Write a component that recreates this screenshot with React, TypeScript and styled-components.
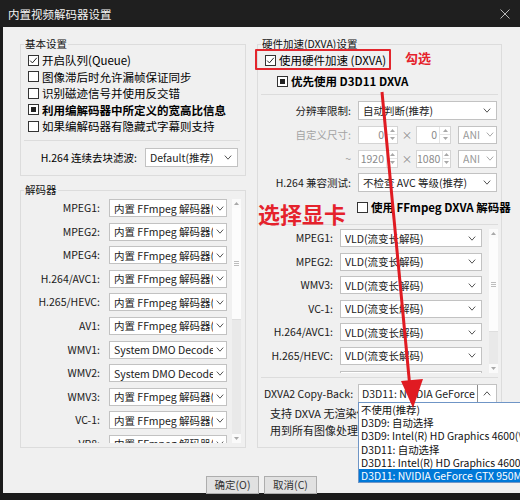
import React from 'react';
import styled, { createGlobalStyle } from 'styled-components';

const FONT = '"Noto Sans CJK SC", "Noto Sans", sans-serif';

const GlobalStyle = createGlobalStyle`
  html, body {
    margin: 0;
    padding: 0;
    background: #1b1b1b;
  }
  body {
    font-family: ${FONT};
  }
`;

const Window = styled.div`
  position: relative;
  width: 520px;
  height: 500px;
  overflow: hidden;
  display: flex;
  flex-direction: column;
  background: #1b1b1b;
  font-family: ${FONT};
  color: #000;
`;

const TitleBar = styled.div`
  height: 27px;
  flex: none;
  display: flex;
  align-items: center;
  justify-content: space-between;
  padding: 0 10px 0 8px;
  background: #1f1f1f;
  color: #f2f2f2;
  font-size: 11.5px;
`;

const Body = styled.div`
  flex: none;
  height: 466px;
  margin-left: 3px;
  box-sizing: border-box;
  padding: 9px 0 0 17px;
  background: #f0f0f0;
  display: flex;
  flex-direction: column;
`;

const Columns = styled.div`
  display: flex;
  gap: 11px;
  height: 412px;
`;

const LeftColumn = styled.div`
  width: 226px;
  display: flex;
  flex-direction: column;
  gap: 6px;
`;

const Group = styled.fieldset<{ $width: number; $height: number; $padRight?: number }>`
  margin: 0;
  min-width: 0;
  box-sizing: border-box;
  width: ${(p) => p.$width}px;
  height: ${(p) => p.$height}px;
  border: 1px solid #dcdcdc;
  padding: 0 ${(p) => p.$padRight ?? 3}px 0 3px;
`;

const Legend = styled.legend`
  padding: 0 1px;
  font-size: 10.5px;
  line-height: 16px;
  color: #111;
`;

const CheckRow = styled.label<{ $indent?: number; $bold?: boolean; $top?: number }>`
  display: flex;
  align-items: center;
  gap: 3px;
  height: 16.5px;
  margin-top: ${(p) => p.$top ?? 0}px;
  padding-left: ${(p) => p.$indent ?? 4}px;
  font-size: 11.5px;
  font-weight: ${(p) => (p.$bold ? 700 : 400)};
  white-space: nowrap;
`;

const Box = styled.span`
  width: 11px;
  height: 11px;
  flex: none;
  box-sizing: border-box;
  border: 1px solid #333;
  background: #fff;
  display: flex;
  align-items: center;
  justify-content: center;
`;

const Mark = styled.span`
  width: 5px;
  height: 5px;
  background: #222;
`;

const Separator = styled.div<{ $top: number }>`
  height: 1px;
  margin-top: ${(p) => p.$top}px;
  background: #dcdcdc;
`;

const SelectBox = styled.div<{ $width: number; $height?: number; $disabled?: boolean }>`
  width: ${(p) => p.$width}px;
  height: ${(p) => p.$height ?? 18}px;
  box-sizing: border-box;
  flex: none;
  border: 1px solid #c2c2c2;
  background: #fff;
  display: flex;
  align-items: center;
  padding-left: 4px;
  font-size: 10.5px;
  color: ${(p) => (p.$disabled ? '#9a9a9a' : '#222')};
`;

const SelectText = styled.span`
  flex: 1;
  min-width: 0;
  overflow: hidden;
  white-space: nowrap;
`;

const Chevron = styled.span<{ $narrow?: boolean }>`
  width: ${(p) => (p.$narrow ? 13 : 18)}px;
  flex: none;
  display: flex;
  align-items: center;
  justify-content: center;
`;

const OpenField = styled.span`
  flex: 1;
  min-width: 0;
  height: 100%;
  box-sizing: border-box;
  margin-left: -4px;
  padding-left: 3px;
  border-right: 1px solid #8c8c8c;
  overflow: hidden;
  white-space: nowrap;
  display: flex;
  align-items: center;
`;

const Spin = styled.div<{ $width: number }>`
  width: ${(p) => p.$width}px;
  height: 18px;
  flex: none;
  box-sizing: border-box;
  border: 1px solid #d4d4d4;
  background: #fff;
  display: flex;
`;

const SpinValue = styled.span`
  flex: 1;
  text-align: right;
  padding-right: 2px;
  font-size: 10.5px;
  line-height: 16px;
  color: #8a8a8a;
`;

const SpinArrows = styled.span`
  width: 10px;
  display: flex;
  flex-direction: column;
  border-left: 1px solid #e4e4e4;
`;

const SpinArrow = styled.span`
  flex: 1;
  display: flex;
  align-items: center;
  justify-content: center;
  & + & {
    border-top: 1px solid #e4e4e4;
  }
`;

const Times = styled.span`
  width: 18px;
  flex: none;
  text-align: center;
  font-size: 10.5px;
  line-height: 18px;
  color: #8a8a8a;
`;

const SizeControls = styled.div`
  display: flex;
  align-items: center;
`;

const FormRow = styled.div<{ $top?: number; $alignLeft?: boolean }>`
  display: grid;
  grid-template-columns: 90px 139px;
  column-gap: 7px;
  align-items: center;
  height: 19px;
  margin-top: ${(p) => p.$top ?? 5}px;
  font-size: 10.5px;
  & > span:first-child {
    text-align: ${(p) => (p.$alignLeft ? 'left' : 'right')};
    padding-left: ${(p) => (p.$alignLeft ? 3 : 0)}px;
    white-space: nowrap;
  }
`;

const FieldLabel = styled.span<{ $disabled?: boolean }>`
  color: ${(p) => (p.$disabled ? '#a3a3a3' : '#1a1a1a')};
`;

const FilterRow = styled.div`
  display: grid;
  grid-template-columns: 113px 93px;
  column-gap: 8px;
  align-items: center;
  height: 19px;
  margin-top: 7px;
  font-size: 10.5px;
  & > span:first-child {
    text-align: right;
    white-space: nowrap;
  }
`;

const ScrollArea = styled.div<{ $height: number; $top: number }>`
  display: flex;
  height: ${(p) => p.$height}px;
  margin-top: ${(p) => p.$top}px;
  overflow: hidden;
`;

const ScrollRows = styled.div`
  flex: 1;
  min-width: 0;
`;

const DecoderRow = styled.div<{ $labelWidth: number; $gap: number }>`
  display: grid;
  grid-template-columns: ${(p) => p.$labelWidth}px auto;
  column-gap: ${(p) => p.$gap}px;
  align-items: start;
  height: 23.6px;
  font-size: 10.5px;
  & > span:first-child {
    text-align: right;
    line-height: 18px;
    white-space: nowrap;
    color: #1a1a1a;
  }
`;

const Scrollbar = styled.div`
  width: 9px;
  flex: none;
  display: flex;
  flex-direction: column;
  background: #e9e9e9;
`;

const ScrollArrow = styled.span`
  height: 9px;
  flex: none;
  display: flex;
  align-items: center;
  justify-content: center;
  background: #fafafa;
`;

const ScrollThumb = styled.span<{ $height: number }>`
  height: ${(p) => p.$height}px;
  flex: none;
  box-sizing: border-box;
  background: #fcfcfc;
  border-bottom: 1px solid #dedede;
  display: flex;
  flex-direction: column;
  align-items: center;
  justify-content: center;
  gap: 1px;
  & > i {
    width: 5px;
    height: 1px;
    background: #bdbdbd;
  }
`;

const ScrollTrack = styled.span`
  flex: 1;
`;

const Note = styled.div<{ $top?: number }>`
  margin-top: ${(p) => p.$top ?? 0}px;
  padding-left: 9px;
  font-size: 11px;
  line-height: 17px;
  color: #1a1a1a;
  white-space: nowrap;
  overflow: hidden;
`;

const Gap = styled.span<{ $width: number }>`
  width: ${(p) => p.$width}px;
  flex: none;
`;

const Footer = styled.div`
  margin-left: -17px;
  padding-top: 28px;
  display: flex;
  justify-content: center;
  gap: 5px;
`;

const Button = styled.button`
  width: 53px;
  height: 18px;
  box-sizing: border-box;
  padding: 0;
  border: 1px solid #adadad;
  background: #e1e1e1;
  font-family: ${FONT};
  font-size: 10.5px;
  line-height: 16px;
  color: #333;
`;

/* overlays: the open drop-down list and the red annotations */

const DropList = styled.ul`
  position: absolute;
  left: 358px;
  top: 402px;
  width: 172px;
  margin: 0;
  padding: 0;
  list-style: none;
  box-sizing: border-box;
  border: 1px solid #6f95c6;
  background: #fff;
  font-size: 10.4px;
  color: #111;
`;

const DropItem = styled.li<{ $active?: boolean }>`
  height: 13.2px;
  line-height: 13.2px;
  padding-left: 2px;
  white-space: nowrap;
  background: ${(p) => (p.$active ? '#0078d7' : 'transparent')};
  color: ${(p) => (p.$active ? '#fff' : '#111')};
`;

const RedBox = styled.div`
  position: absolute;
  left: 255px;
  top: 49px;
  width: 136px;
  height: 21px;
  box-sizing: border-box;
  border: 2.5px solid #e3262d;
  border-radius: 1px;
`;

const RedNote = styled.span<{ $left: number; $top: number; $size: number }>`
  position: absolute;
  left: ${(p) => p.$left}px;
  top: ${(p) => p.$top}px;
  font-size: ${(p) => p.$size}px;
  line-height: ${(p) => p.$size + 4}px;
  font-weight: 700;
  color: #e5222c;
  white-space: nowrap;
`;

const ArrowLayer = styled.svg`
  position: absolute;
  left: 0;
  top: 0;
  pointer-events: none;
`;

const ChevronDown = ({ color = '#555' }: { color?: string }) => (
  <svg width="8" height="5" viewBox="0 0 8 5">
    <path d="M0.8 0.6 L4 4.2 L7.2 0.6" fill="none" stroke={color} strokeWidth="1" />
  </svg>
);

const ChevronUp = ({ color = '#555' }: { color?: string }) => (
  <svg width="8" height="5" viewBox="0 0 8 5">
    <path d="M0.8 4.4 L4 0.8 L7.2 4.4" fill="none" stroke={color} strokeWidth="1" />
  </svg>
);

const TinyArrow = ({ up }: { up?: boolean }) => (
  <svg width="5" height="3" viewBox="0 0 5 3">
    <path d={up ? 'M0 3 L2.5 0 L5 3 Z' : 'M0 0 L2.5 3 L5 0 Z'} fill="#a8a8a8" />
  </svg>
);

const Check = ({ state, label, ...rest }: {
  state: 'on' | 'off' | 'mark';
  label: string;
  $indent?: number;
  $bold?: boolean;
  $top?: number;
}) => (
  <CheckRow {...rest}>
    <Box>
      {state === 'on' && (
        <svg width="9" height="9" viewBox="0 0 9 9">
          <path d="M1.2 4.6 L3.4 6.9 L7.8 1.8" fill="none" stroke="#222" strokeWidth="1" />
        </svg>
      )}
      {state === 'mark' && <Mark />}
    </Box>
    {label}
  </CheckRow>
);

const Select = ({ text, width, height, disabled, narrow }: {
  text: string;
  width: number;
  height?: number;
  disabled?: boolean;
  narrow?: boolean;
}) => (
  <SelectBox $width={width} $height={height} $disabled={disabled}>
    <SelectText>{text}</SelectText>
    <Chevron $narrow={narrow}>
      <ChevronDown color={disabled ? '#a8a8a8' : '#555'} />
    </Chevron>
  </SelectBox>
);

const SpinBox = ({ value, width }: { value: string; width: number }) => (
  <Spin $width={width}>
    <SpinValue>{value}</SpinValue>
    <SpinArrows>
      <SpinArrow>
        <TinyArrow up />
      </SpinArrow>
      <SpinArrow>
        <TinyArrow />
      </SpinArrow>
    </SpinArrows>
  </Spin>
);

const FakeScrollbar = ({ thumb }: { thumb: number }) => (
  <Scrollbar>
    <ScrollArrow>
      <TinyArrow up />
    </ScrollArrow>
    <ScrollThumb $height={thumb}>
      <i />
      <i />
      <i />
    </ScrollThumb>
    <ScrollTrack />
    <ScrollArrow>
      <TinyArrow />
    </ScrollArrow>
  </Scrollbar>
);

const FF = '内置 FFmpeg 解码器(推荐)';
const DMO = 'System DMO Decoder';

const softwareDecoders = [
  ['MPEG1', FF],
  ['MPEG2', FF],
  ['MPEG4', FF],
  ['H.264/AVC1', FF],
  ['H.265/HEVC', FF],
  ['AV1', FF],
  ['WMV1', DMO],
  ['WMV2', DMO],
  ['WMV3', FF],
  ['VC-1', FF],
  ['VP8', FF],
];

const dxvaDecoders = ['MPEG1', 'MPEG2', 'WMV3', 'VC-1', 'H.264/AVC1', 'H.265/HEVC', 'VP9'];

const copyBackOptions = [
  '不使用(推荐)',
  'D3D9: 自动选择',
  'D3D9: Intel(R) HD Graphics 4600(\\\\.\\DISPLAY1)',
  'D3D11: 自动选择',
  'D3D11: Intel(R) HD Graphics 4600',
  'D3D11: NVIDIA GeForce GTX 950M',
];

const App = () => (
  <Window>
    <GlobalStyle />
    <TitleBar>
      <span>内置视频解码器设置</span>
      <svg width="10" height="10" viewBox="0 0 10 10">
        <path d="M0.5 0.5 L9.5 9.5 M9.5 0.5 L0.5 9.5" stroke="#b8b8b8" strokeWidth="1" />
      </svg>
    </TitleBar>

    <Body>
      <Columns>
        <LeftColumn>
          <Group $width={226} $height={140} $padRight={5}>
            <Legend>基本设置</Legend>
            <Check state="on" label="开启队列(Queue)" />
            <Check state="off" label="图像滞后时允许漏帧保证同步" />
            <Check state="off" label="识别磁迹信号并使用反交错" />
            <Check state="mark" label="利用编解码器中所定义的宽高比信息" $bold />
            <Check state="off" label="如果编解码器有隐藏式字幕则支持" />
            <Separator $top={5.5} />
            <FilterRow>
              <span>H.264 连续去块滤波:</span>
              <Select text="Default(推荐)" width={93} height={19} />
            </FilterRow>
          </Group>

          <Group $width={226} $height={266} $padRight={4}>
            <Legend>解码器</Legend>
            <ScrollArea $height={244} $top={1}>
              <ScrollRows>
                {softwareDecoders.map(([name, value]) => (
                  <DecoderRow key={name} $labelWidth={76} $gap={9}>
                    <span>{name}:</span>
                    <Select text={value} width={118} narrow />
                  </DecoderRow>
                ))}
              </ScrollRows>
              <FakeScrollbar thumb={112} />
            </ScrollArea>
          </Group>
        </LeftColumn>

        <Group $width={245} $height={412}>
          <Legend>硬件加速(DXVA)设置</Legend>
          <Check state="on" label="使用硬件加速 (DXVA)" />
          <Check state="mark" label="优先使用 D3D11 DXVA" $bold $indent={16} $top={4.5} />
          <Separator $top={4.5} />

          <FormRow $top={6}>
            <FieldLabel>分辨率限制:</FieldLabel>
            <Select text="自动判断(推荐)" width={139} height={19} />
          </FormRow>
          <FormRow>
            <FieldLabel $disabled>自定义尺寸:</FieldLabel>
            <SizeControls>
              <SpinBox value="0" width={40} />
              <Times>×</Times>
              <SpinBox value="0" width={35} />
              <Gap $width={7} />
              <Select text="ANI" width={39} disabled narrow />
            </SizeControls>
          </FormRow>
          <FormRow>
            <FieldLabel $disabled>~</FieldLabel>
            <SizeControls>
              <SpinBox value="1920" width={40} />
              <Times>×</Times>
              <SpinBox value="1080" width={35} />
              <Gap $width={7} />
              <Select text="ANI" width={39} disabled narrow />
            </SizeControls>
          </FormRow>
          <FormRow>
            <FieldLabel>H.264 兼容测试:</FieldLabel>
            <Select text="不检查 AVC 等级(推荐)" width={139} height={19} />
          </FormRow>
          <Check state="off" label="使用 FFmpeg DXVA 解码器" $bold $indent={96} $top={7} />
          <Separator $top={8.5} />

          <ScrollArea $height={144} $top={4}>
            <ScrollRows>
              {dxvaDecoders.map((name) => (
                <DecoderRow key={name} $labelWidth={72} $gap={7}>
                  <span>{name}:</span>
                  <Select text="VLD(流变长解码)" width={142} />
                </DecoderRow>
              ))}
            </ScrollRows>
            <FakeScrollbar thumb={94} />
          </ScrollArea>
          <Separator $top={4} />

          <FormRow $top={6} $alignLeft>
            <FieldLabel>DXVA2 Copy-Back:</FieldLabel>
            <SelectBox $width={139} $height={19}>
              <OpenField>D3D11: NVIDIA GeForce GTX 950M</OpenField>
              <Chevron>
                <ChevronUp />
              </Chevron>
            </SelectBox>
          </FormRow>
          <Note $top={1.5}>支持 DXVA 无渲染依赖的 Copy-Back 模式，可以应</Note>
          <Note>用到所有图像处理中。</Note>
        </Group>
      </Columns>

      <Footer>
        <Button>确定(O)</Button>
        <Button>取消(C)</Button>
      </Footer>
    </Body>

    <DropList>
      {copyBackOptions.map((option, index) => (
        <DropItem key={option} $active={index === copyBackOptions.length - 1}>
          {option}
        </DropItem>
      ))}
    </DropList>

    <RedBox />
    <RedNote $left={405} $top={49} $size={13}>
      勾选
    </RedNote>
    <RedNote $left={258} $top={200} $size={22}>
      选择显卡
    </RedNote>
    <ArrowLayer width="520" height="500" viewBox="0 0 520 500">
      <line x1="382" y1="92" x2="410" y2="388" stroke="#e01b22" strokeWidth="3" />
      <polygon points="401,381 423,379 413,408" fill="#e01b22" />
    </ArrowLayer>
  </Window>
);

export default App;
